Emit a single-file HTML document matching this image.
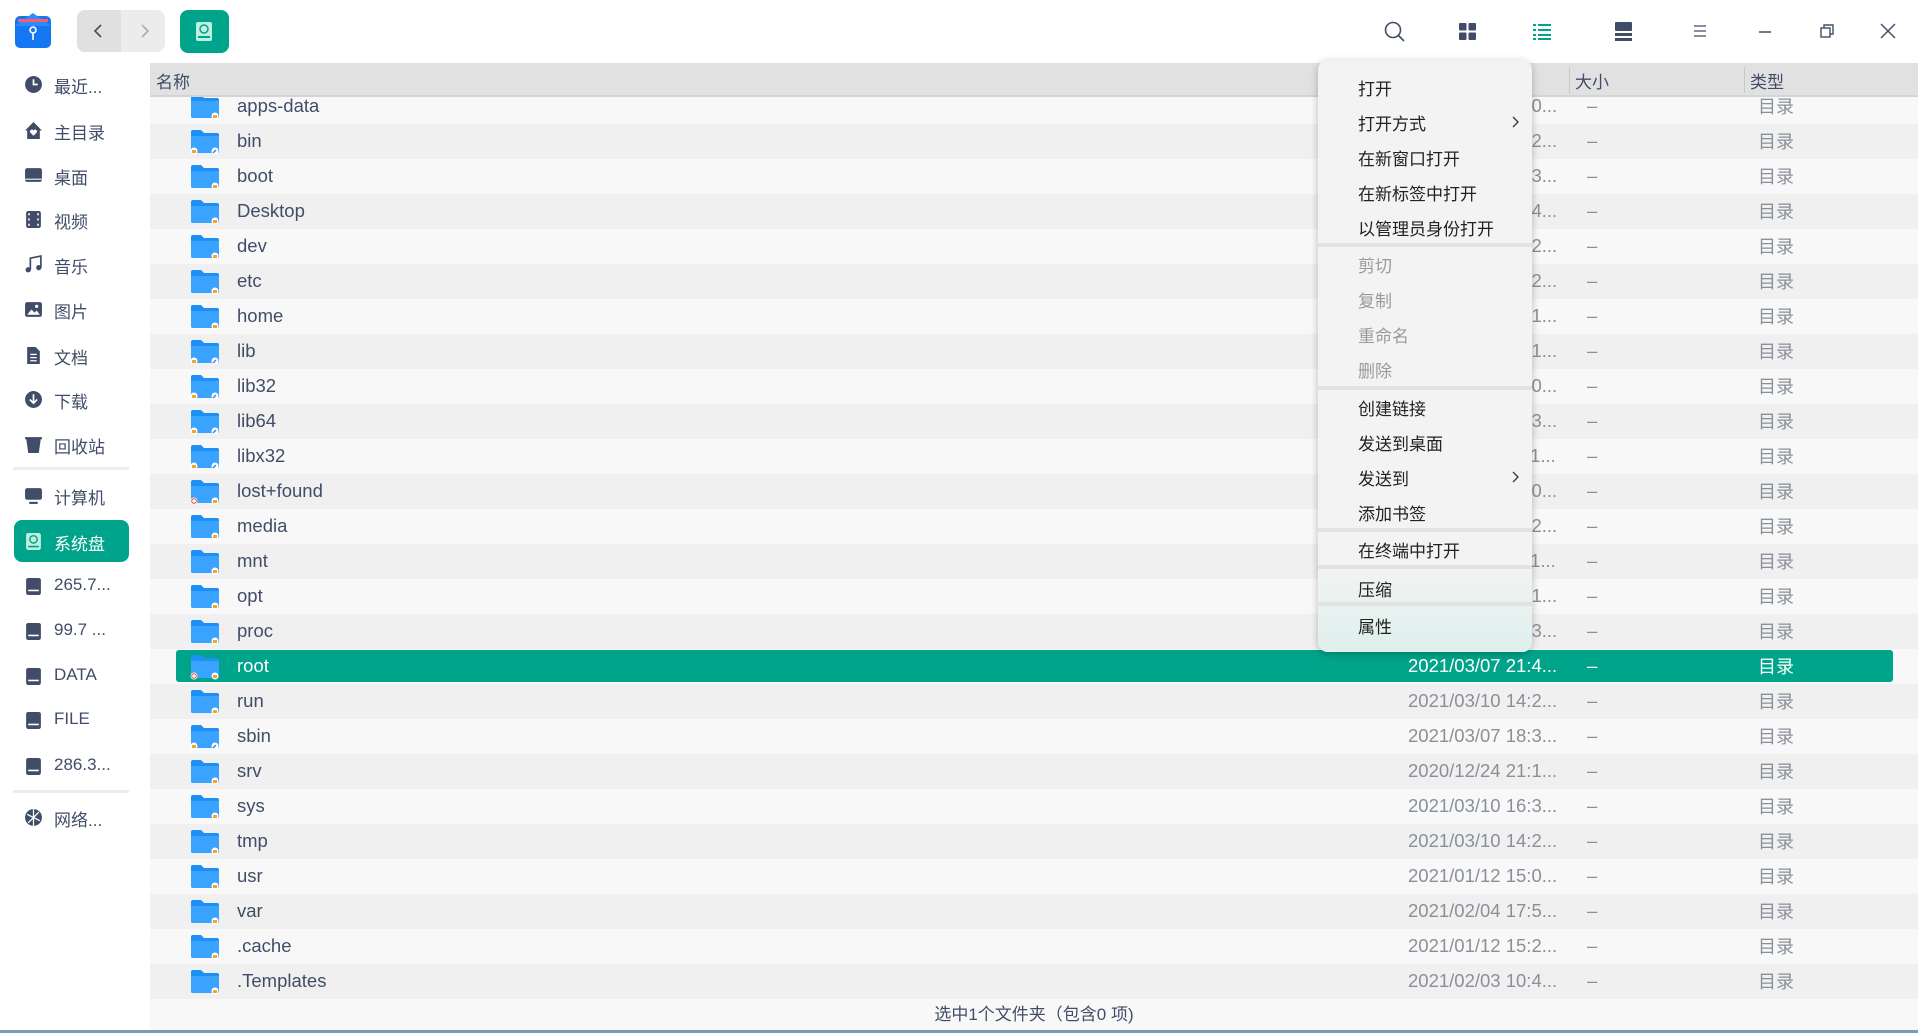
<!DOCTYPE html>
<html><head><meta charset="utf-8"><style>
*{margin:0;padding:0;box-sizing:border-box}
body{width:1918px;height:1033px;overflow:hidden;background:#fff;font-family:"Liberation Sans","Noto Sans CJK SC",sans-serif;position:relative;color:#414d68}
.abs{position:absolute}
.main{position:absolute;left:150px;top:63px;width:1768px;height:970px;background:#f8f8f8}
.hdr{position:absolute;left:150px;top:63px;width:1768px;height:34px;background:#e1e1e1;border-bottom:2px solid #d4d4d4;font-size:17px;color:#414d68}
.row{position:absolute;left:150px;width:1768px;height:35px;font-size:18.5px}
.row.g{background:#f0f0f0}
.row span{position:absolute;top:6px;white-space:nowrap}
.nm{left:87px;color:#414d68}
.dt{left:1258px;color:#8a9099}
.sz{left:1437px;color:#8a9099}
.row span.tp{left:1608px;color:#8a9099;top:4px;font-size:18px}
.fold{position:absolute;left:40px;top:5px}
.sel{position:absolute;left:176px;top:650px;width:1717px;height:32px;background:#00a48a;border-radius:3px}
.side{position:absolute;left:0;font-size:17px;color:#414d68}
.side .ic{position:absolute;left:24px;top:2px;width:19px;height:19px}
.side .t{position:absolute;left:54px;white-space:nowrap}
.menu{position:absolute;left:1318px;top:60px;width:214px;height:592px;background:#f3f3f3;border-radius:10px;box-shadow:0 2px 8px rgba(0,0,0,.25);overflow:hidden;font-size:17px;color:#222}
.menu div{position:absolute;left:40px;white-space:nowrap}
.menu .d{color:#9a9a9a}
.menu .sp{left:0;width:214px;height:4px;background:#e2e2e2}
</style></head><body>

<svg class="abs" style="left:15px;top:12px" width="37" height="37" viewBox="0 0 37 37"><rect x="0" y="4" width="36" height="32" rx="5" fill="#1476f0"/><path d="M0 14 L18 1 L36 14 Z" fill="#2b8cff"/><rect x="3" y="7" width="30" height="3" fill="#ff5a6a"/><circle cx="18" cy="18" r="3" fill="none" stroke="#fff" stroke-width="1.6"/><path d="M18 21v7" stroke="#fff" stroke-width="1.6"/></svg>
<div class="abs" style="left:77px;top:10px;width:88px;height:42px;border-radius:8px;background:#ececec;overflow:hidden"><div style="width:44px;height:42px;background:#e0e0e0"></div></div>
<svg class="abs" style="left:90px;top:22px" width="18" height="18"><path d="M11 3 L5 9 L11 15" stroke="#414d68" stroke-width="1.6" fill="none"/></svg>
<svg class="abs" style="left:136px;top:22px" width="18" height="18"><path d="M6 3 L12 9 L6 15" stroke="#a8adb5" stroke-width="1.6" fill="none"/></svg>
<div class="abs" style="left:180px;top:10px;width:49px;height:43px;border-radius:8px;background:#00a48a"></div>
<svg class="abs" style="left:195px;top:21px" width="18" height="22"><rect x="1" y="1" width="16" height="19" rx="2" fill="#bfeee2"/><circle cx="9" cy="8" r="4" fill="none" stroke="#00a48a" stroke-width="1.5"/><rect x="3" y="15" width="12" height="2" fill="#00a48a"/></svg>

<svg class="abs" style="left:1383px;top:20px" width="24" height="24"><circle cx="10" cy="10" r="7.5" fill="none" stroke="#414d68" stroke-width="1.6"/><path d="M15.5 15.5 L21 21" stroke="#414d68" stroke-width="1.6"/></svg>
<svg class="abs" style="left:1459px;top:23px" width="18" height="18"><rect x="0" y="0" width="7.5" height="7.5" rx="1" fill="#414d68"/><rect x="9.5" y="0" width="7.5" height="7.5" rx="1" fill="#414d68"/><rect x="0" y="9.5" width="7.5" height="7.5" rx="1" fill="#414d68"/><rect x="9.5" y="9.5" width="7.5" height="7.5" rx="1" fill="#414d68"/></svg>
<svg class="abs" style="left:1533px;top:23px" width="18" height="18"><g fill="#00a48a"><rect x="0" y="1" width="3" height="2"/><rect x="5" y="1" width="13" height="2"/><rect x="0" y="6" width="3" height="2"/><rect x="5" y="6" width="13" height="2"/><rect x="0" y="11" width="3" height="2"/><rect x="5" y="11" width="13" height="2"/><rect x="0" y="15" width="3" height="2"/><rect x="5" y="15" width="13" height="2"/></g></svg>
<svg class="abs" style="left:1615px;top:22px" width="18" height="19"><rect x="0" y="0" width="17" height="9" rx="1" fill="#414d68"/><rect x="0" y="11" width="17" height="3" fill="#414d68"/><rect x="0" y="16" width="17" height="3" fill="#414d68"/></svg>
<svg class="abs" style="left:1693px;top:24px" width="14" height="14"><path d="M1 2h12M1 7h12M1 12h12" stroke="#414d68" stroke-width="1.3"/></svg>
<svg class="abs" style="left:1758px;top:24px" width="14" height="14"><path d="M1 8h12" stroke="#414d68" stroke-width="1.5"/></svg>
<svg class="abs" style="left:1820px;top:24px" width="14" height="14"><rect x="1" y="4" width="9" height="9" fill="none" stroke="#414d68" stroke-width="1.4"/><path d="M4 4V1h9v9h-3" fill="none" stroke="#414d68" stroke-width="1.4"/></svg>
<svg class="abs" style="left:1880px;top:23px" width="16" height="16"><path d="M1 1L15 15M15 1L1 15" stroke="#414d68" stroke-width="1.5"/></svg>

<div class="side" style="top:73px"><svg class="ic" viewBox="0 0 18 18"><circle cx="9" cy="9" r="8" fill="#414d68"/><path d="M9 4v5h4" stroke="#fff" stroke-width="1.6" fill="none"/></svg><span class="t">最近...</span></div>
<div class="side" style="top:119px"><svg class="ic" viewBox="0 0 18 18"><path d="M9 1L1 9h2v8h12V9h2z" fill="#414d68"/><path d="M9 14l-3-3a1.6 1.6 0 013-2a1.6 1.6 0 013 2z" fill="#fff"/></svg><span class="t">主目录</span></div>
<div class="side" style="top:164px"><svg class="ic" viewBox="0 0 18 18"><rect x="1" y="2" width="16" height="13" rx="2" fill="#414d68"/><rect x="1" y="12" width="16" height="1" fill="#fff"/></svg><span class="t">桌面</span></div>
<div class="side" style="top:208px"><svg class="ic" viewBox="0 0 18 18"><rect x="2" y="1" width="14" height="16" rx="2" fill="#414d68"/><g fill="#fff"><rect x="4" y="3" width="1.5" height="2"/><rect x="4" y="8" width="1.5" height="2"/><rect x="4" y="13" width="1.5" height="2"/><rect x="12.5" y="3" width="1.5" height="2"/><rect x="12.5" y="8" width="1.5" height="2"/><rect x="12.5" y="13" width="1.5" height="2"/></g></svg><span class="t">视频</span></div>
<div class="side" style="top:253px"><svg class="ic" viewBox="0 0 18 18"><path d="M6 14V3l10-2v11" stroke="#414d68" stroke-width="1.6" fill="none"/><circle cx="4" cy="14" r="2.5" fill="#414d68"/><circle cx="14" cy="12" r="2.5" fill="#414d68"/></svg><span class="t">音乐</span></div>
<div class="side" style="top:298px"><svg class="ic" viewBox="0 0 18 18"><rect x="1" y="2" width="16" height="14" rx="2" fill="#414d68"/><path d="M3 14l4-5 3 3 2-2 3 4z" fill="#fff"/><circle cx="12" cy="6" r="1.5" fill="#fff"/></svg><span class="t">图片</span></div>
<div class="side" style="top:344px"><svg class="ic" viewBox="0 0 18 18"><path d="M3 1h8l4 4v12H3z" fill="#414d68"/><path d="M6 8h6M6 11h6M6 14h6" stroke="#fff" stroke-width="1.2"/></svg><span class="t">文档</span></div>
<div class="side" style="top:388px"><svg class="ic" viewBox="0 0 18 18"><circle cx="9" cy="9" r="8" fill="#414d68"/><path d="M9 4v8M5.5 9L9 12.5 12.5 9" stroke="#fff" stroke-width="1.6" fill="none"/></svg><span class="t">下载</span></div>
<div class="side" style="top:433px"><svg class="ic" viewBox="0 0 18 18"><path d="M2 3h14l-2 14H4z" fill="#414d68"/><rect x="1" y="2" width="16" height="2" fill="#414d68"/></svg><span class="t">回收站</span></div>
<div class="abs" style="left:13px;top:467px;width:116px;height:3px;background:#ececec"></div>
<div class="side" style="top:484px"><svg class="ic" viewBox="0 0 18 18"><rect x="1" y="2" width="16" height="11" rx="2" fill="#414d68"/><rect x="5" y="15" width="8" height="2" fill="#414d68"/></svg><span class="t">计算机</span></div>
<div class="abs" style="left:14px;top:520px;width:115px;height:42px;border-radius:8px;background:#00a48a"></div>
<div class="side" style="top:530px;color:#fff"><svg class="ic" viewBox="0 0 18 18"><rect x="2" y="1" width="14" height="16" rx="2" fill="#bfeee2"/><circle cx="9" cy="7" r="3.5" fill="none" stroke="#00a48a" stroke-width="1.4"/><rect x="4" y="13" width="10" height="1.6" fill="#00a48a"/></svg><span class="t">系统盘</span></div>
<div class="side" style="top:575px"><svg class="ic" viewBox="0 0 18 18"><rect x="2" y="1" width="14" height="16" rx="2" fill="#414d68"/><rect x="4" y="12" width="10" height="1.5" fill="#fff"/></svg><span class="t">265.7...</span></div>
<div class="side" style="top:620px"><svg class="ic" viewBox="0 0 18 18"><rect x="2" y="1" width="14" height="16" rx="2" fill="#414d68"/><rect x="4" y="12" width="10" height="1.5" fill="#fff"/></svg><span class="t">99.7 ...</span></div>
<div class="side" style="top:665px"><svg class="ic" viewBox="0 0 18 18"><rect x="2" y="1" width="14" height="16" rx="2" fill="#414d68"/><rect x="4" y="12" width="10" height="1.5" fill="#fff"/></svg><span class="t">DATA</span></div>
<div class="side" style="top:709px"><svg class="ic" viewBox="0 0 18 18"><rect x="2" y="1" width="14" height="16" rx="2" fill="#414d68"/><rect x="4" y="12" width="10" height="1.5" fill="#fff"/></svg><span class="t">FILE</span></div>
<div class="side" style="top:755px"><svg class="ic" viewBox="0 0 18 18"><rect x="2" y="1" width="14" height="16" rx="2" fill="#414d68"/><rect x="4" y="12" width="10" height="1.5" fill="#fff"/></svg><span class="t">286.3...</span></div>
<div class="abs" style="left:13px;top:790px;width:116px;height:3px;background:#ececec"></div>
<div class="side" style="top:806px"><svg class="ic" viewBox="0 0 18 18"><circle cx="9" cy="9" r="8" fill="#414d68"/><path d="M3 6l12 6M9 1v16M4 14l10-10" stroke="#fff" stroke-width="1.2"/></svg><span class="t">网络...</span></div>

<div class="main"></div>
<div id="rows"></div>
<div class="hdr"><span class="abs" style="left:6px;top:5px">名称</span><div class="abs" style="left:1419px;top:4px;width:1px;height:26px;background:#c8c8c8"></div><span class="abs" style="left:1425px;top:5px">大小</span><div class="abs" style="left:1594px;top:4px;width:1px;height:26px;background:#c8c8c8"></div><span class="abs" style="left:1600px;top:5px">类型</span></div>

<div class="abs" style="left:150px;top:1000px;width:1768px;text-align:center;font-size:17px;color:#414d68">选中1个文件夹（包含0 项)</div>
<div class="abs" style="left:0;top:1030px;width:1918px;height:3px;background:#7a9ab8"></div>

<div class="menu">
<div style="top:15px">打开</div>
<div style="top:50px">打开方式</div><svg style="position:absolute;left:192px;top:55px" width="10" height="14"><path d="M3 2l5 5-5 5" stroke="#333" stroke-width="1.3" fill="none"/></svg>
<div style="top:85px">在新窗口打开</div>
<div style="top:120px">在新标签中打开</div>
<div style="top:155px">以管理员身份打开</div>
<div class="sp" style="top:183px"></div>
<div class="d" style="top:192px">剪切</div>
<div class="d" style="top:227px">复制</div>
<div class="d" style="top:262px">重命名</div>
<div class="d" style="top:297px">删除</div>
<div class="sp" style="top:326px"></div>
<div style="top:335px">创建链接</div>
<div style="top:370px">发送到桌面</div>
<div style="top:405px">发送到</div><svg style="position:absolute;left:192px;top:410px" width="10" height="14"><path d="M3 2l5 5-5 5" stroke="#333" stroke-width="1.3" fill="none"/></svg>
<div style="top:440px">添加书签</div>
<div class="sp" style="top:468px"></div>
<div style="top:477px">在终端中打开</div>
<div class="sp" style="top:505px"></div>
<div style="left:0;top:509px;width:214px;height:83px;background:linear-gradient(#f1f3f3,#dff0ec)"></div>
<div style="top:516px">压缩</div>
<div class="sp" style="top:542px"></div>
<div style="top:553px">属性</div>
</div>

<script>
(function(){
var names=["apps-data","bin","boot","Desktop","dev","etc","home","lib","lib32","lib64","libx32","lost+found","media","mnt","opt","proc","root","run","sbin","srv","sys","tmp","usr","var",".cache",".Templates"];
var dates=["2021/03/07 12:0...","2021/03/07 10:2...","2021/03/07 10:3...","2021/03/07 10:4...","2021/03/10 14:2...","2021/03/10 14:2...","2021/03/07 16:1...","2021/03/07 10:1...","2021/03/07 10:0...","2021/03/07 10:3...","2021/03/07 11:1...","2021/03/07 16:0...","2021/03/07 12:2...","2021/03/07 11:1...","2021/03/07 10:1...","2021/03/10 16:3...","2021/03/07 21:4...","2021/03/10 14:2...","2021/03/07 18:3...","2020/12/24 21:1...","2021/03/10 16:3...","2021/03/10 14:2...","2021/01/12 15:0...","2021/02/04 17:5...","2021/01/12 15:2...","2021/02/03 10:4..."];
var link={1:1,7:1,8:1,9:1,10:1,18:1};
var h='';
for(var i=0;i<26;i++){
 var ty=89+35*i; var s=(i==16);
 var c=s?' style="color:#fff"':'';
 var f='<svg class="fold" width="30" height="26" viewBox="0 0 30 26"><path d="M1 3a2 2 0 012-2h8l3 3h13a2 2 0 012 2v16a2 2 0 01-2 2H3a2 2 0 01-2-2z" fill="#1e8ff5"/><path d="M1 7h28v15a2 2 0 01-2 2H3a2 2 0 01-2-2z" fill="#3aa3ff"/>'+
 (link[i]?'<circle cx="4" cy="22" r="3.5" fill="#fff"/><rect x="2" y="21" width="4" height="3" fill="#f5a623"/><circle cx="25" cy="22" r="3.5" fill="#fff"/><path d="M23 24l3-3" stroke="#3b82f6" stroke-width="1.5"/>':
 '<circle cx="25" cy="22" r="3.5" fill="#fff"/><rect x="23" y="21" width="4" height="3" fill="#f5a623"/>')+
 ((i==11||i==16)?'<circle cx="4" cy="22" r="3.5" fill="#fff"/><circle cx="4" cy="22" r="2.3" fill="none" stroke="#f04a2a" stroke-width="1"/>':'')+'</svg>';
 var bg=s?'background:transparent;':'';
 h+='<div class="row'+(i%2?' g':'')+'" style="top:'+ty+'px;'+bg+'">'+f+'<span class="nm"'+c+'>'+names[i]+'</span><span class="dt"'+c+'>'+dates[i]+'</span><span class="sz"'+c+'>–</span><span class="tp"'+c+'>目录</span></div>';
}
var r=document.getElementById('rows');
var tmp=document.createElement('div');tmp.innerHTML=h;r.appendChild(tmp);
var hl=document.createElement('div');hl.className='sel';r.insertBefore(hl,tmp);
})();
</script>
</body></html>
